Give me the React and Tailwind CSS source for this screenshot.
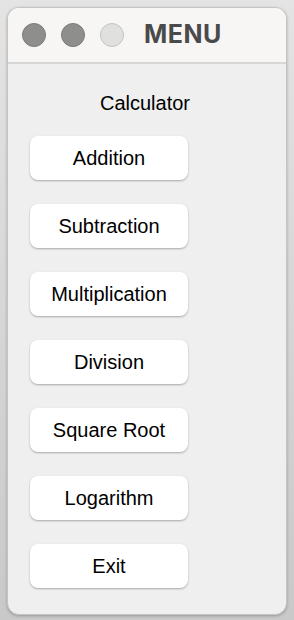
import React from 'react';

const items = ['Addition', 'Subtraction', 'Multiplication', 'Division', 'Square Root', 'Logarithm', 'Exit'];

export default function App() {
  return (
    <div className="w-[294px] h-[620px] bg-gradient-to-b from-[#e4e4e4] to-[#c9c9c9] px-[7px] pt-[7px] pb-[5px] font-['Liberation_Sans',Arial,sans-serif]">
      <div className="h-full rounded-[12px] bg-[#efefef] border border-[#c4c4c4] shadow-[0_1px_3px_rgba(0,0,0,0.25)] overflow-hidden flex flex-col">
        {/* title bar */}
        <div className="h-[56px] bg-[#f7f6f5] border-b-2 border-[#d6d6d6] flex items-center pl-[14px] gap-[15px] shrink-0">
          <span className="w-[24px] h-[24px] rounded-full bg-[#8e8e8d] border border-[#7a7a7a]" />
          <span className="w-[24px] h-[24px] rounded-full bg-[#8e8e8d] border border-[#7a7a7a]" />
          <span className="w-[24px] h-[24px] rounded-full bg-[#e0e0df] border border-[#c4c4c4]" />
          <span className="ml-[5px] text-[25px] font-bold tracking-[0.5px] text-[#4a4a4a] font-['Inter','Liberation_Sans',sans-serif]">MENU</span>
        </div>
        <div className="flex flex-col items-start pl-[22px]">
          <div className="w-[230px] text-center text-[20px] text-black mt-[27px] mb-[21px] leading-[24px]">Calculator</div>
          <div className="flex flex-col gap-[24px]">
            {items.map((t) => (
              <button
                key={t}
                className="w-[158px] h-[44px] bg-white rounded-[8px] shadow-[0_1px_2px_rgba(0,0,0,0.3)] text-[20px] text-black"
              >
                {t}
              </button>
            ))}
          </div>
        </div>
      </div>
    </div>
  );
}
